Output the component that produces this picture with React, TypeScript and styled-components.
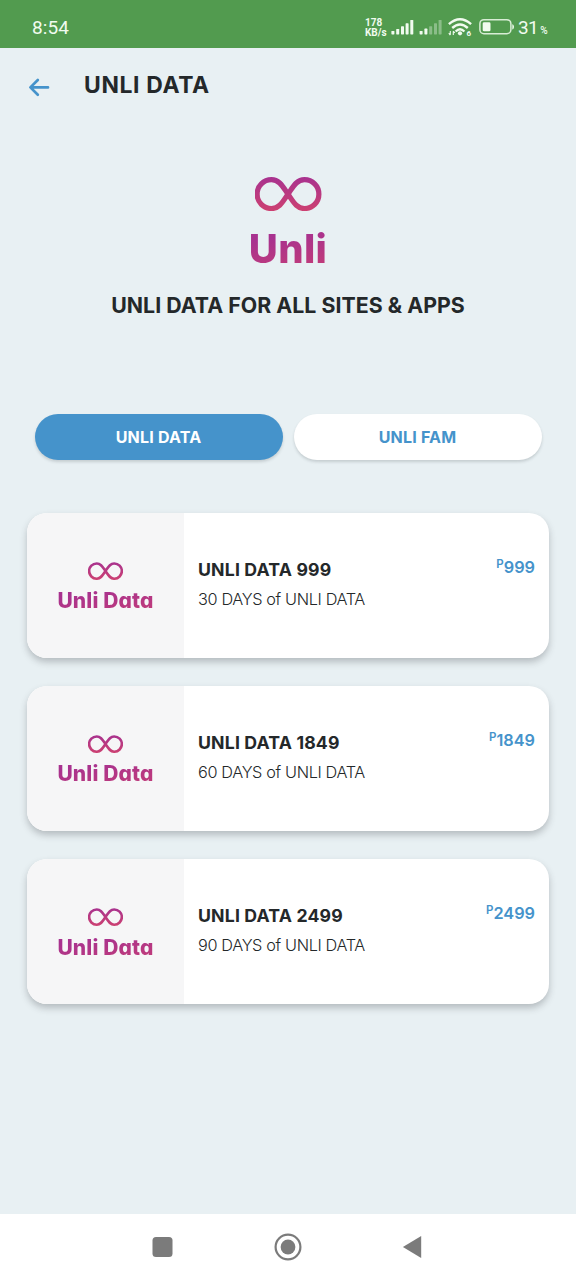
import React from "react";
import styled, { createGlobalStyle } from "styled-components";

const GlobalStyle = createGlobalStyle`
  * { box-sizing: border-box; }
  body { margin: 0; background: #e8f0f3; }
`;

const brandGradient = "linear-gradient(170deg, #a8328f 30%, #c23c78 85%)";

const Screen = styled.div`
  width: 576px;
  height: 1280px;
  display: flex;
  flex-direction: column;
  overflow: hidden;
  background: #e8f0f3;
  color: #24282a;
  font-family: Inter, "Open Sans", sans-serif;
  font-feature-settings: "cv11" 1, "ss03" 1;
`;

const StatusBar = styled.header`
  height: 48px;
  flex: none;
  display: flex;
  align-items: flex-start;
  padding: 16px 29px 0 32px;
  background: #529b4f;
  color: #f1fbef;
  font-family: Roboto, sans-serif;
`;

const Clock = styled.time`
  font-size: 19px;
  line-height: 24px;
  letter-spacing: 0.1px;
  margin-right: auto;
`;

const Speed = styled.div`
  width: 26px;
  padding-top: 2px;
  font-size: 10px;
  font-weight: 700;
  line-height: 10px;
  white-space: nowrap;
`;

const BatteryText = styled.div`
  display: flex;
  align-items: baseline;
  font-size: 19px;
  line-height: 24px;
  width: 29px;
  margin-left: 2px;
  letter-spacing: -0.6px;
`;

const Percent = styled.span`
  font-size: 10px;
  font-weight: 500;
  margin-left: 2px;
`;

const AppBar = styled.nav`
  height: 74px;
  flex: none;
  display: flex;
  align-items: center;
  padding-left: 28px;
`;

const BackButton = styled.button`
  display: flex;
  width: 56px;
  height: 26px;
  padding: 4px 0 0;
  border: 0;
  background: none;
`;

const Title = styled.h1<{ $size: number; $spacing: number }>`
  margin: 0;
  font-size: ${(p) => p.$size}px;
  line-height: 28px;
  font-weight: 700;
  letter-spacing: ${(p) => p.$spacing}px;
  white-space: nowrap;
`;

const Hero = styled.section`
  height: 292px;
  flex: none;
  display: flex;
  flex-direction: column;
  align-items: center;
  padding-top: 54.5px;
`;

const BrandText = styled.div<{ $size: number; $spacing: number; $height: number }>`
  font-size: ${(p) => p.$size}px;
  line-height: ${(p) => p.$height}px;
  letter-spacing: ${(p) => p.$spacing}px;
  font-weight: 800;
  background: ${brandGradient};
  -webkit-background-clip: text;
  background-clip: text;
  color: transparent;
  white-space: nowrap;
`;

const HeroName = styled.div`
  margin: 10.5px 0 13.5px;
`;

const Tabs = styled.div`
  display: flex;
  gap: 11px;
  padding: 0 34.5px;
  margin-bottom: 52px;
`;

const Tab = styled.button<{ $active?: boolean }>`
  flex: 1;
  height: 46px;
  border: 0;
  border-radius: 23px;
  padding: 0;
  font: inherit;
  font-size: 16px;
  font-weight: 700;
  letter-spacing: 0.2px;
  background: ${(p) => (p.$active ? "#4593cb" : "#fff")};
  color: ${(p) => (p.$active ? "#fff" : "#4593cb")};
  box-shadow: 0 2px 3px rgba(60, 70, 75, 0.2);
`;

const Offers = styled.main`
  flex: 1;
  display: flex;
  flex-direction: column;
  gap: 27.7px;
  padding: 0.5px 27px 0;
`;

const Card = styled.article`
  height: 145.5px;
  display: flex;
  border-radius: 20px;
  overflow: hidden;
  background: #fff;
  box-shadow: 0 4px 7px rgba(50, 55, 60, 0.28);
`;

const CardArt = styled.div`
  width: 157px;
  display: flex;
  flex-direction: column;
  align-items: center;
  padding-top: 49.5px;
  background: #f6f6f7;
`;

const CardBody = styled.div`
  flex: 1;
  display: flex;
  justify-content: space-between;
  padding: 43.5px 14px 0;
`;

const OfferName = styled.h2`
  margin: 1px 0 0;
  font-size: 17.7px;
  line-height: 26px;
  font-weight: 700;
  letter-spacing: 0.15px;
`;

const OfferDetail = styled.p`
  margin: 2.5px 0 0;
  font-size: 16.3px;
  line-height: 26px;
  font-weight: 300;
  letter-spacing: -0.36px;
`;

const Price = styled.div`
  display: flex;
  align-items: flex-start;
  color: #4593cb;
  font-size: 16.3px;
  line-height: 22px;
  font-weight: 600;
`;

const Currency = styled.span`
  font-size: 11.5px;
  line-height: 17px;
`;

const NavBar = styled.footer`
  height: 66px;
  flex: none;
  display: flex;
  align-items: center;
  justify-content: center;
  gap: 98px;
  background: #fff;
`;

const Infinity = ({ width, stroke, id }: { width: number; stroke: number; id: string }) => (
  <svg width={width} height={width / 1.956} viewBox="0.5 0 66.5 34" fill="none">
    <defs>
      <linearGradient id={id} x1="0" y1="0" x2="0" y2="34" gradientUnits="userSpaceOnUse">
        <stop stopColor="#a8328f" />
        <stop offset="1" stopColor="#cd4171" />
      </linearGradient>
    </defs>
    <path
      d="M33.25 17C28 9.5 24.8 2.7 16.9 2.7A14.3 14.3 0 0 0 16.9 31.3C24.8 31.3 28 24.5 33.25 17C38.5 9.5 41.7 2.7 49.6 2.7A14.3 14.3 0 0 1 49.6 31.3C41.7 31.3 38.5 24.5 33.25 17Z"
      stroke={`url(#${id})`}
      strokeWidth={stroke}
    />
  </svg>
);

const StatusIcons = () => (
  <svg width="125" height="24" viewBox="391 16 125 24" fill="#f1fbef">
    <rect x="391.4" y="31" width="3" height="3.4" rx=".6" />
    <rect x="396.2" y="29" width="3" height="5.4" rx=".6" />
    <rect x="401" y="26.2" width="3" height="8.2" rx=".6" />
    <rect x="405.6" y="23.3" width="3" height="11.1" rx=".6" />
    <rect x="410.3" y="20" width="3" height="14.4" rx=".6" />
    <rect x="419.6" y="31" width="3" height="3.4" rx=".6" />
    <rect x="424.4" y="28.6" width="3" height="5.8" rx=".6" />
    <g opacity=".36">
      <rect x="429.2" y="26.2" width="3" height="8.2" rx=".6" />
      <rect x="434" y="23.3" width="3" height="11.1" rx=".6" />
      <rect x="438.6" y="20" width="3" height="14.4" rx=".6" />
    </g>
    <g fill="none" stroke="#f1fbef" strokeWidth="2.4">
      <path d="M448.9 24.2Q460 14.2 471.1 24.2" />
      <path d="M452.2 28Q460 20.8 467.8 28" />
      <path d="M455.6 31.5Q460 27.2 464.4 31.5" />
    </g>
    <circle cx="460" cy="33.3" r="2.1" />
    <path d="M450.3 31v3.8M448.8 33.2l1.5 1.9M453.3 35v-3.8M454.8 33l-1.5-1.9" stroke="#f1fbef" strokeWidth="1.1" />
    <text x="466.4" y="36" fontSize="8" fontWeight="700" fontFamily="Roboto">6</text>
    <rect x="479.9" y="19.7" width="31" height="14" rx="4" fill="none" stroke="#d8edd5" strokeWidth="1.5" />
    <rect x="482.7" y="22.3" width="7.8" height="9" rx="1.4" />
    <path d="M512.3 24.2c2.2.4 2.2 4.8 0 5.2z" />
  </svg>
);

const offers = [
  { price: "999", days: 30 },
  { price: "1849", days: 60 },
  { price: "2499", days: 90 },
];

export default function App() {
  return (
    <Screen>
      <GlobalStyle />
      <StatusBar>
        <Clock>8:54</Clock>
        <Speed>178<br />KB/s</Speed>
        <StatusIcons />
        <BatteryText>31<Percent>%</Percent></BatteryText>
      </StatusBar>
      <AppBar>
        <BackButton aria-label="Back">
          <svg width="22" height="22" viewBox="0 0 22 22" fill="none" stroke="#4593cb" strokeWidth="2.7" strokeLinecap="round" strokeLinejoin="round">
            <path d="M20 11.4H2.6M9.8 4L2.4 11.4L9.8 18.8" />
          </svg>
        </BackButton>
        <Title $size={22.9} $spacing={0.65}>UNLI DATA</Title>
      </AppBar>
      <Hero>
        <Infinity width={67} stroke={5.2} id="hero" />
        <HeroName>
          <BrandText $size={40} $spacing={0.3} $height={56}>Unli</BrandText>
        </HeroName>
        <Title as="h2" $size={21.3} $spacing={0.04}>UNLI DATA FOR ALL SITES &amp; APPS</Title>
      </Hero>
      <Tabs>
        <Tab $active>UNLI DATA</Tab>
        <Tab>UNLI FAM</Tab>
      </Tabs>
      <Offers>
        {offers.map((o) => (
          <Card key={o.price}>
            <CardArt>
              <Infinity width={35.5} stroke={4.9} id={`offer-${o.price}`} />
              <BrandText $size={21} $spacing={0.15} $height={41}>Unli Data</BrandText>
            </CardArt>
            <CardBody>
              <div>
                <OfferName>UNLI DATA {o.price}</OfferName>
                <OfferDetail>{o.days} DAYS of UNLI DATA</OfferDetail>
              </div>
              <Price><Currency>P</Currency>{o.price}</Price>
            </CardBody>
          </Card>
        ))}
      </Offers>
      <NavBar>
        <svg width="27" height="28" viewBox="0 0 27 28"><rect x="3.5" y="4" width="20" height="20" rx="3.5" fill="#7b7b7b" /></svg>
        <svg width="28" height="28" viewBox="0 0 28 28" fill="none"><circle cx="14" cy="14" r="12.4" stroke="#7b7b7b" strokeWidth="2.2" /><circle cx="14" cy="14" r="7.4" fill="#7b7b7b" /></svg>
        <svg width="27" height="28" viewBox="0 0 27 28"><path d="M2.9 14L21.2 3V25Z" fill="#7b7b7b" /></svg>
      </NavBar>
    </Screen>
  );
}
